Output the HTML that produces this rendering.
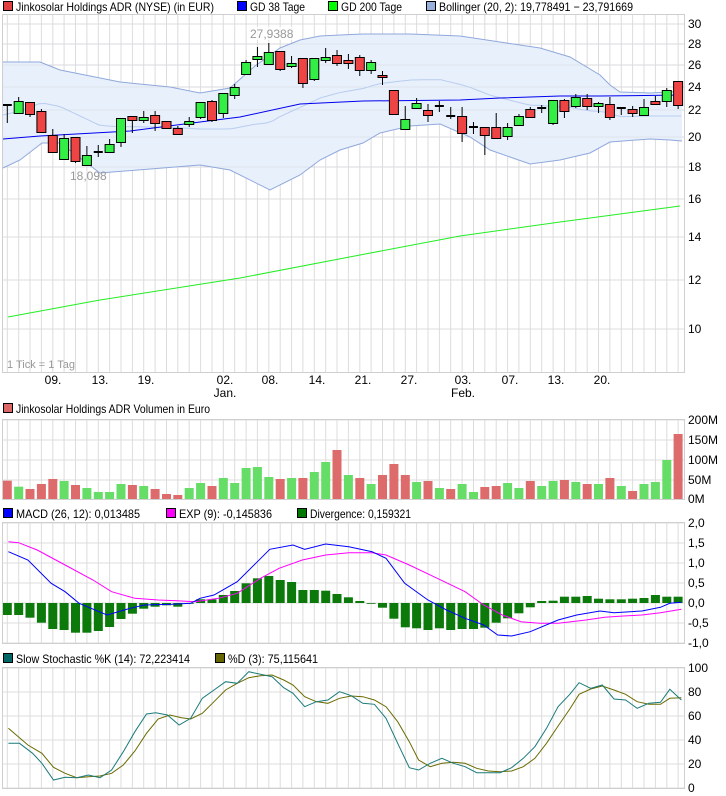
<!DOCTYPE html>
<html><head><meta charset="utf-8">
<style>
html,body{margin:0;padding:0;background:#fff;width:726px;height:796px;overflow:hidden}
svg{display:block}
text{font-family:"Liberation Sans",Arial,sans-serif;font-size:12px;fill:#000}
</style></head><body>
<svg id="s" width="726" height="796" viewBox="0 0 726 796" xmlns="http://www.w3.org/2000/svg"></svg>
<script>
const S=document.getElementById('s');let h='';
const X0=7.3,DX=11.37,L=3,R=684;
const cx=i=>X0+i*DX;
function vgrid(y1,y2){for(let i=0;i<60;i++){h+=`<line x1="${cx(i).toFixed(1)}" y1="${y1}" x2="${cx(i).toFixed(1)}" y2="${y2}" stroke="#dcdcdc"/>`;}}
function hline(y){h+=`<line x1="${L}" y1="${y}" x2="${R}" y2="${y}" stroke="#dcdcdc"/>`;}
function box(y1,y2){h+=`<rect x="${L-0.5}" y="${y1-0.5}" width="${R-L+1}" height="${y2-y1+1}" fill="none" stroke="#cfcfcf"/>`;}
function leg(x,y,c,t,w){h+=`<rect x="${x+0.5}" y="${y-9.5}" width="9" height="9" fill="${c}" stroke="#000"/><text x="${x+13}" y="${y}" textLength="${w}" lengthAdjust="spacingAndGlyphs">${t}</text>`;}
function poly(pts,c,w){h+=`<polyline fill="none" stroke="${c}" stroke-width="${w||1}" points="${pts.map(p=>p[0].toFixed(1)+','+p[1].toFixed(1)).join(' ')}"/>`;}
// ===== Price panel
const PT=15,PB=372;
leg(3,11,'#e04040','Jinkosolar Holdings ADR (NYSE) (in EUR)',198);
leg(237,11,'#0000ff','GD 38 Tage',55);
leg(328,11,'#00ff00','GD 200 Tage',61);
leg(426,11,'#98b0dc','Bollinger (20, 2): 19,778491 − 23,791669',194);
const yl=[[30,24],[28,44],[26,65],[24,87],[22,110],[20,137],[18,167],[16,199],[14,237],[12,280],[10,329]];
yl.forEach(a=>hline(a[1]));
vgrid(PT,PB);
const up=[[3,62],[40,62],[60,70],[120,82],[170,87],[200,93],[230,88],[255,66],[280,48],[300,40],[320,36],[340,35],[363,34],[410,34],[460,36],[500,42],[540,48],[570,57],[600,75],[610,85],[620,92],[650,93],[670,92],[682,91]];
const lo=[[3,168],[20,160],[42,143],[60,143],[100,173],[200,165],[230,170],[270,190],[300,175],[320,160],[340,150],[363,143],[380,133],[410,126],[440,124],[470,137],[490,150],[530,164],[560,160],[590,153],[610,142],[650,139],[670,140],[682,141]];
function interp(a,x){for(let i=0;i<a.length-1;i++){if(x>=a[i][0]&&x<=a[i+1][0]){const t=(x-a[i][0])/(a[i+1][0]-a[i][0]);return a[i][1]+t*(a[i+1][1]-a[i][1]);}}return a[a.length-1][1];}
h+=`<polygon fill="#e8f0fb" points="${up.map(p=>p.join(',')).join(' ')} ${lo.slice().reverse().map(p=>p.join(',')).join(' ')}"/>`;
yl.forEach(a=>{if(a[1]>30&&a[1]<195)h+=`<line x1="${L}" y1="${a[1]}" x2="${R}" y2="${a[1]}" stroke="#d4d8e0" stroke-opacity="0.5"/>`;});
const mid=[];for(let x=3;x<=682;x+=6)mid.push([x,(interp(up,x)+interp(lo,x))/2]);
poly(mid,'#b8ccf0');poly(up,'#90a8dc');poly(lo,'#90a8dc');
poly([[3,139],[40,136],[130,131],[200,122],[240,117],[300,104],[363,101],[460,100],[500,98],[560,96],[600,96],[683,95]],'#0000ee');
poly([[8,317],[100,300],[240,278],[360,255],[460,236],[560,222],[680,206]],'#22ee22');
const C=[[105,106,105,123,'x'],[101,113,97,114,'g'],[102,114,102,117,'r'],[111,132,109,133,'r'],[135,152,129,153,'r'],[138,159,134,159,'g'],[137,161,137,163,'r'],[155,165,146,165,'g'],[152,152,145,157,'x'],[144,152,139,152,'g'],[118,142,118,147,'g'],[116,120,116,133,'r'],[117,120,111,123,'g'],[115,123,111,131,'r'],[121,128,121,128,'r'],[128,134,126,135,'r'],[121,124,117,127,'g'],[102,117,102,119,'g'],[101,120,100,122,'r'],[93,113,93,118,'g'],[87,95,84,99,'g'],[62,74,60,74,'g'],[56,59,47,67,'g'],[52,64,43,64,'g'],[51,69,51,71,'r'],[63,66,56,68,'g'],[58,83,58,88,'r'],[58,79,58,81,'g'],[57,60,48,63,'g'],[55,63,50,66,'r'],[60,63,54,69,'r'],[57,70,55,76,'r'],[62,70,60,74,'g'],[75,77,71,85,'r'],[90,114,90,115,'r'],[119,129,106,129,'g'],[103,108,98,108,'g'],[110,115,104,122,'r'],[106,106,101,112,'x'],[116,116,107,119,'x'],[116,133,107,142,'r'],[127,127,122,134,'x'],[127,135,127,155,'r'],[127,138,113,139,'r'],[127,136,123,140,'g'],[116,125,114,125,'g'],[109,117,107,118,'r'],[108,108,105,113,'x'],[100,123,100,125,'g'],[100,111,99,118,'r'],[97,106,94,108,'g'],[98,106,94,110,'r'],[103,106,102,113,'g'],[104,117,97,120,'r'],[108,108,107,115,'x'],[109,113,106,117,'r'],[107,115,99,115,'g'],[101,104,96,105,'r'],[90,101,88,107,'g'],[81,105,81,109,'r']];
C.forEach((c,i)=>{const x=cx(i);h+=`<line x1="${x}" y1="${c[2]}" x2="${x}" y2="${c[3]}" stroke="#000"/>`;
 if(c[4]=='x'){h+=`<line x1="${x-4.5}" y1="${c[0]}" x2="${x+4.5}" y2="${c[0]}" stroke="#000" stroke-width="2"/>`;}
 else{h+=`<rect x="${(x-4.5).toFixed(1)}" y="${c[0]+0.5}" width="9" height="${Math.max(c[1]-c[0],2)}" fill="${c[4]=='g'?'#33ee44':'#ee4444'}" stroke="#000"/>`;}});
h+=`<rect x="248" y="27" width="44" height="13" fill="#fff" fill-opacity="0.8"/><text x="250" y="38" style="fill:#999">27,9388</text>`;
h+=`<text x="70" y="180" style="fill:#999">18,098</text>`;
h+=`<text x="7" y="368" style="fill:#999;font-size:11px">1 Tick = 1 Tag</text>`;
box(PT,PB);
yl.forEach(a=>{h+=`<text x="688" y="${a[1]+4}">${a[0]}</text>`;});
[['09.',53],['13.',100],['19.',146],['02.',225,'Jan.'],['08.',270],['14.',317],['21.',363],['27.',409],['03.',463,'Feb.'],['07.',510],['13.',556],['20.',602]].forEach(a=>{h+=`<text x="${a[1]}" y="384" text-anchor="middle">${a[0]}</text>`;if(a[2])h+=`<text x="${a[1]}" y="397" text-anchor="middle">${a[2]}</text>`;});
// ===== Volume
leg(3,413,'#dd6666','Jinkosolar Holdings ADR Volumen in Euro',194);
const VT=420,VB=499;
[420,440,460,480].forEach(hline);vgrid(VT,VB);
const vz=[422,440,447,432,417,423,435,444,456,456,432,435,438,447,462,465,444,429,438,414,429,384,381,411,417,414,414,396,366,330,405,414,432,405,372,405,426,423,444,447,432,456,441,438,429,444,423,438,423,420,426,432,432,414,438,453,432,426,360,282];
const vc='rgrrrgrggggrgrrrggrgggggrgrggrgrgrrrgrgrggrrggrggrgrgrgrgggr';
vz.forEach((z,i)=>{const y=340+z/3;h+=`<rect x="${(cx(i)-4.5).toFixed(1)}" y="${y.toFixed(1)}" width="9" height="${(VB-y).toFixed(1)}" fill="${vc[i]=='g'?'#66dd66':'#dd6b6b'}"/>`;});
box(VT,VB);
[['200M',424],['150M',444],['100M',464],['50M',484],['0M',503]].forEach(a=>{h+=`<text x="688" y="${a[1]}">${a[0]}</text>`;});
// ===== MACD
leg(3,518,'#0000ff','MACD (26, 12): 0,013485',124);
leg(166,518,'#ff00ff','EXP (9): -0,145836',93);
leg(297,518,'#007700','Divergence: 0,159321',101);
const MT=523,MB=643;
[523,543,563,583,603,623,643].forEach(hline);vgrid(MT,MB);
const dz=[345,345,353,368,387,390,398,398,393,381,357,341,326,320,316,320,310,298,298,285,273,250,235,228,240,246,270,270,272,282,292,303,310,323,356,382,385,390,385,390,387,387,383,368,355,340,322,303,302,290,290,288,296,298,298,296,294,285,290,290];
dz.forEach((z,i)=>{const y=500+z/3,y0=603;h+=`<rect x="${(cx(i)-4.5).toFixed(1)}" y="${Math.min(y,y0).toFixed(1)}" width="9" height="${Math.max(Math.abs(y-y0),0.8).toFixed(1)}" fill="#0b7a0b"/>`;});
const F=2.15;
const cv=(a,oy)=>a.map(p=>[p[0]/F,oy+p[1]/3]);
poly(cv([[18,125],[40,128],[80,150],[140,195],[200,240],[240,275],[290,295],[340,300],[380,302],[420,305],[470,295],[510,280],[560,235],[600,205],[650,180],[700,165],[750,158],[800,158],[830,165],[880,195],[940,235],[1000,275],[1040,315],[1080,345],[1120,365],[1160,370],[1200,370],[1260,360],[1300,352],[1340,348],[1380,345],[1420,338],[1465,328]],500),'#ff00ff');
poly(cv([[18,155],[60,180],[110,250],[140,275],[170,310],[230,345],[280,325],[310,315],[370,313],[410,310],[430,295],[460,285],[510,245],[550,190],[580,148],[630,135],[655,148],[700,132],[750,140],[800,155],[830,175],[870,250],[920,300],[960,330],[1000,355],[1040,375],[1070,405],[1100,408],[1140,395],[1200,360],[1240,345],[1290,333],[1320,338],[1380,333],[1420,322],[1440,310],[1465,307]],500),'#0000ff');
box(MT,MB);
[['2,0',527],['1,5',547],['1,0',567],['0,5',587],['0,0',607],['-0,5',627],['-1,0',647]].forEach(a=>{h+=`<text x="688" y="${a[1]}">${a[0]}</text>`;});
// ===== Stochastic
leg(3,663,'#006666','Slow Stochastic %K (14): 72,223414',174);
leg(215,663,'#666600','%D (3): 75,115641',90);
const ST=668,SB=788;
[668,692,716,740,764,788].forEach(hline);vgrid(ST,SB);
poly(cv([[18,250],[60,300],[90,325],[115,367],[140,385],[165,398],[190,395],[215,393],[240,385],[265,360],[290,318],[315,265],[340,222],[365,210],[390,218],[410,222],[435,205],[460,170],[485,135],[510,115],[535,98],[560,92],[585,90],[610,105],[630,120],[655,155],[680,170],[705,175],[730,160],[755,153],[780,155],[805,165],[830,185],[855,230],[880,290],[900,345],[925,365],[950,355],[975,352],[1000,355],[1025,370],[1050,378],[1075,380],[1100,378],[1125,365],[1150,340],[1175,295],[1200,243],[1225,192],[1245,148],[1270,132],[1295,123],[1320,135],[1345,148],[1370,170],[1395,178],[1420,178],[1440,160],[1465,158]],645),'#6b6b00');
poly(cv([[18,295],[42,295],[70,325],[90,355],[115,405],[140,397],[165,398],[190,390],[215,398],[240,375],[265,320],[290,260],[315,207],[335,203],[360,210],[385,240],[410,220],[435,160],[460,135],[485,110],[510,115],[535,80],[560,88],[585,95],[610,128],[630,145],[655,185],[680,170],[705,165],[730,140],[755,152],[780,175],[805,178],[830,220],[855,295],[880,368],[900,375],[925,355],[950,340],[975,355],[1000,365],[1025,383],[1050,383],[1075,383],[1100,368],[1125,340],[1150,305],[1175,250],[1200,185],[1225,148],[1245,113],[1270,130],[1295,120],[1320,162],[1345,165],[1370,190],[1395,175],[1420,172],[1440,133],[1465,165]],645),'#1a7a7a');
box(ST,SB);
[['100',672],['80',696],['60',720],['40',744],['20',768],['0',792]].forEach(a=>{h+=`<text x="688" y="${a[1]}">${a[0]}</text>`;});
S.innerHTML=h;
</script>
</body></html>
